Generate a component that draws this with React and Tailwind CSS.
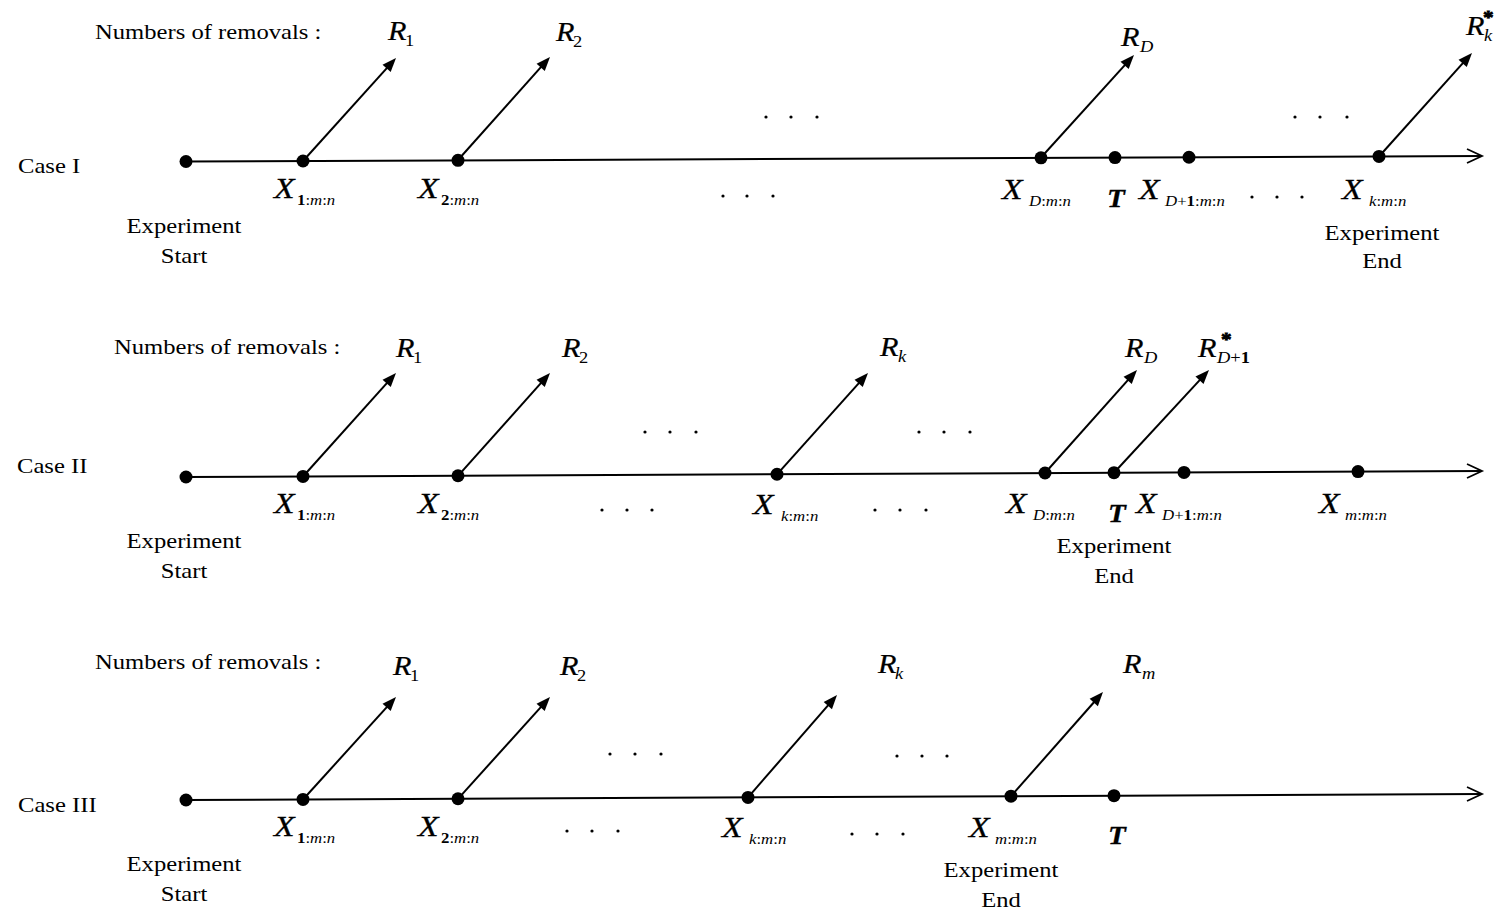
import React from "react";

const SX = 1.12;

function Tx({ x, y, size = 22, anchor = "start", italic = false, bold = false, heavy = 0, children }) {
  return (
    <text
      x={0}
      y={0}
      transform={`translate(${x} ${y}) scale(${SX} 1)`}
      fontSize={size}
      textAnchor={anchor}
      fontStyle={italic ? "italic" : "normal"}
      fontWeight={bold ? "bold" : "normal"}
      fill="#000"
      stroke={heavy ? "#000" : "none"}
      strokeWidth={heavy}
    >
      {children}
    </text>
  );
}

// subscript pieces: [text, kind] kind: 'b' bold upright, 'i' italic, 'r' regular
function Pieces({ parts }) {
  return parts.map(([t, k], i) => (
    <tspan
      key={i}
      fontStyle={k === "i" ? "italic" : "normal"}
      fontWeight={k === "b" ? "bold" : "normal"}
    >
      {t}
    </tspan>
  ));
}

const SUB = {
  one: [["1", "b"], [":", "r"], ["m", "i"], [":", "r"], ["n", "i"]],
  two: [["2", "b"], [":", "r"], ["m", "i"], [":", "r"], ["n", "i"]],
  D: [["D", "i"], [":", "r"], ["m", "i"], [":", "r"], ["n", "i"]],
  D1: [["D", "i"], ["+", "r"], ["1", "b"], [":", "r"], ["m", "i"], [":", "r"], ["n", "i"]],
  k: [["k", "i"], [":", "r"], ["m", "i"], [":", "r"], ["n", "i"]],
  m: [["m", "i"], [":", "r"], ["m", "i"], [":", "r"], ["n", "i"]],
};

function XLabel({ x, y, sub, off = 25 }) {
  return (
    <g>
      <Tx x={x} y={y} size={30} italic heavy={0.3}>
        X
      </Tx>
      <text
        x={0}
        y={0}
        transform={`translate(${x + off} ${y + 7}) scale(${SX} 1)`}
        fontSize={15}
        fill="#000"
      >
        <Pieces parts={SUB[sub]} />
      </text>
    </g>
  );
}

function RLabel({ x, y, sub, star, off = 18 }) {
  return (
    <g>
      <Tx x={x} y={y} size={27} italic heavy={0.25}>
        R
      </Tx>
      <text
        x={0}
        y={0}
        transform={`translate(${x + off} ${y + 6}) scale(${SX} 1)`}
        fontSize={16.5}
        fill="#000"
      >
        <Pieces parts={sub} />
      </text>
      {star && (
        <text
          x={0}
          y={0}
          transform={`translate(${star[0]} ${star[1]}) scale(${SX} 1)`}
          fontSize={19}
          fontWeight="bold"
          fill="#000"
          stroke="#000"
          strokeWidth={0.8}
        >
          *
        </text>
      )}
    </g>
  );
}

function Arrow({ from, to }) {
  const [x1, y1] = from;
  const [x2, y2] = to;
  const dx = x2 - x1;
  const dy = y2 - y1;
  const L = Math.hypot(dx, dy);
  const ux = dx / L;
  const uy = dy / L;
  const hl = 14;
  const hw = 5.5;
  const bx = x2 - ux * hl;
  const by = y2 - uy * hl;
  const px = -uy;
  const py = ux;
  return (
    <g>
      <line x1={x1} y1={y1} x2={bx + ux * 2} y2={by + uy * 2} stroke="#000" strokeWidth={2} />
      <polygon
        points={`${x2},${y2} ${bx + px * hw},${by + py * hw} ${bx - px * hw},${by - py * hw}`}
        fill="#000"
      />
    </g>
  );
}

// axis: straight line from start to tip; dots placed on it
function Axis({ start, tip, xs }) {
  const yAt = (x) => start[1] + ((tip[1] - start[1]) * (x - start[0])) / (tip[0] - start[0]);
  return (
    <g>
      <line x1={start[0]} y1={start[1]} x2={tip[0]} y2={tip[1]} stroke="#000" strokeWidth={2} />
      <polyline
        points={`${tip[0] - 15},${tip[1] - 7} ${tip[0]},${tip[1]} ${tip[0] - 15},${tip[1] + 7}`}
        fill="none"
        stroke="#000"
        strokeWidth={1.8}
      />
      {[start[0], ...xs].map((x, i) => (
        <circle key={i} cx={x} cy={yAt(x)} r={6.5} fill="#000" />
      ))}
    </g>
  );
}

function Ell({ xs, y }) {
  return xs.map((x, i) => <circle key={i} cx={x} cy={y} r={1.6} fill="#000" />);
}

export default function App() {
  return (
    <div className="w-[1502px] h-[924px] bg-white font-['Liberation_Serif',serif] overflow-hidden">
      <svg
        width="1502"
        height="924"
        viewBox="0 0 1502 924"
        className="block"
        fontFamily="'Liberation Serif', 'Times New Roman', serif"
      >
        {/* ---------------- Case I ---------------- */}
        <Tx x={95} y={39}>Numbers of removals :</Tx>
        <Tx x={18} y={173}>Case I</Tx>
        <Tx x={184} y={233} anchor="middle">Experiment</Tx>
        <Tx x={184} y={263} anchor="middle">Start</Tx>
        <Tx x={1382} y={240} anchor="middle">Experiment</Tx>
        <Tx x={1382} y={268} anchor="middle">End</Tx>

        <Axis start={[186, 161.5]} tip={[1482, 156]} xs={[303, 458, 1041, 1115, 1189, 1379]} />
        <Arrow from={[303, 161]} to={[396, 58]} />
        <Arrow from={[458, 160]} to={[550, 57]} />
        <Arrow from={[1041, 157.5]} to={[1134, 55]} />
        <Arrow from={[1379, 156.5]} to={[1472, 53]} />

        <RLabel x={388} y={40} sub={[["1", "r"]]} off={17} />
        <RLabel x={556} y={41} sub={[["2", "r"]]} off={17} />
        <RLabel x={1121} y={46} sub={[["D", "i"]]} off={19} />
        <RLabel x={1466} y={35} sub={[["k", "i"]]} off={18} star={[1483, 24]} />

        <XLabel x={274} y={198} sub="one" off={23} />
        <XLabel x={418} y={198} sub="two" off={23} />
        <XLabel x={1002} y={199} sub="D" off={27} />
        <Tx x={1107} y={207} size={26} italic bold heavy={0.3}>T</Tx>
        <XLabel x={1139} y={199} sub="D1" off={26} />
        <XLabel x={1342} y={199} sub="k" off={27} />

        <Ell xs={[766, 791, 817]} y={117} />
        <Ell xs={[723, 747, 773]} y={196} />
        <Ell xs={[1295, 1320, 1347]} y={117} />
        <Ell xs={[1252, 1277, 1302]} y={197} />

        {/* ---------------- Case II ---------------- */}
        <Tx x={114} y={354}>Numbers of removals :</Tx>
        <Tx x={17} y={473}>Case II</Tx>
        <Tx x={184} y={548} anchor="middle">Experiment</Tx>
        <Tx x={184} y={578} anchor="middle">Start</Tx>
        <Tx x={1114} y={553} anchor="middle">Experiment</Tx>
        <Tx x={1114} y={583} anchor="middle">End</Tx>

        <Axis start={[186, 477]} tip={[1482, 471]} xs={[303, 458, 777, 1045, 1114, 1184, 1358]} />
        <Arrow from={[303, 476.5]} to={[396, 373]} />
        <Arrow from={[458, 475.8]} to={[550, 373]} />
        <Arrow from={[777, 474.3]} to={[868, 373]} />
        <Arrow from={[1045, 473]} to={[1137, 370]} />
        <Arrow from={[1114, 472.7]} to={[1209, 370]} />

        <RLabel x={396} y={357} sub={[["1", "r"]]} off={17} />
        <RLabel x={562} y={357} sub={[["2", "r"]]} off={17} />
        <RLabel x={880} y={356} sub={[["k", "i"]]} off={18} />
        <RLabel x={1125} y={357} sub={[["D", "i"]]} off={19} />
        <RLabel
          x={1198}
          y={357}
          sub={[
            ["D", "i"],
            ["+", "r"],
            ["1", "b"],
          ]}
          off={19}
          star={[1221, 346]}
        />

        <XLabel x={274} y={513} sub="one" off={23} />
        <XLabel x={418} y={513} sub="two" off={23} />
        <XLabel x={753} y={514} sub="k" off={28} />
        <XLabel x={1006} y={513} sub="D" off={27} />
        <Tx x={1108} y={522} size={26} italic bold heavy={0.3}>T</Tx>
        <XLabel x={1136} y={513} sub="D1" off={26} />
        <XLabel x={1319} y={513} sub="m" off={26} />

        <Ell xs={[645, 670, 696]} y={432} />
        <Ell xs={[919, 944, 970]} y={432} />
        <Ell xs={[602, 627, 652]} y={510} />
        <Ell xs={[875, 900, 926]} y={510} />

        {/* ---------------- Case III ---------------- */}
        <Tx x={95} y={669}>Numbers of removals :</Tx>
        <Tx x={18} y={812}>Case III</Tx>
        <Tx x={184} y={871} anchor="middle">Experiment</Tx>
        <Tx x={184} y={901} anchor="middle">Start</Tx>
        <Tx x={1001} y={877} anchor="middle">Experiment</Tx>
        <Tx x={1001} y={907} anchor="middle">End</Tx>

        <Axis start={[186, 800]} tip={[1482, 794]} xs={[303, 458, 748, 1011, 1114]} />
        <Arrow from={[303, 799.5]} to={[396, 697]} />
        <Arrow from={[458, 798.8]} to={[550, 697]} />
        <Arrow from={[748, 797.4]} to={[837, 695]} />
        <Arrow from={[1011, 796.2]} to={[1103, 692]} />

        <RLabel x={393} y={675} sub={[["1", "r"]]} off={17} />
        <RLabel x={560} y={675} sub={[["2", "r"]]} off={17} />
        <RLabel x={878} y={673} sub={[["k", "i"]]} off={17} />
        <RLabel x={1123} y={673} sub={[["m", "i"]]} off={19} />

        <XLabel x={274} y={836} sub="one" off={23} />
        <XLabel x={418} y={836} sub="two" off={23} />
        <XLabel x={722} y={837} sub="k" off={27} />
        <XLabel x={969} y={837} sub="m" off={26} />
        <Tx x={1108} y={844} size={26} italic bold heavy={0.3}>T</Tx>

        <Ell xs={[610, 635, 661]} y={754} />
        <Ell xs={[897, 922, 947]} y={756} />
        <Ell xs={[567, 592, 618]} y={831} />
        <Ell xs={[852, 877, 903]} y={834} />
      </svg>
    </div>
  );
}
